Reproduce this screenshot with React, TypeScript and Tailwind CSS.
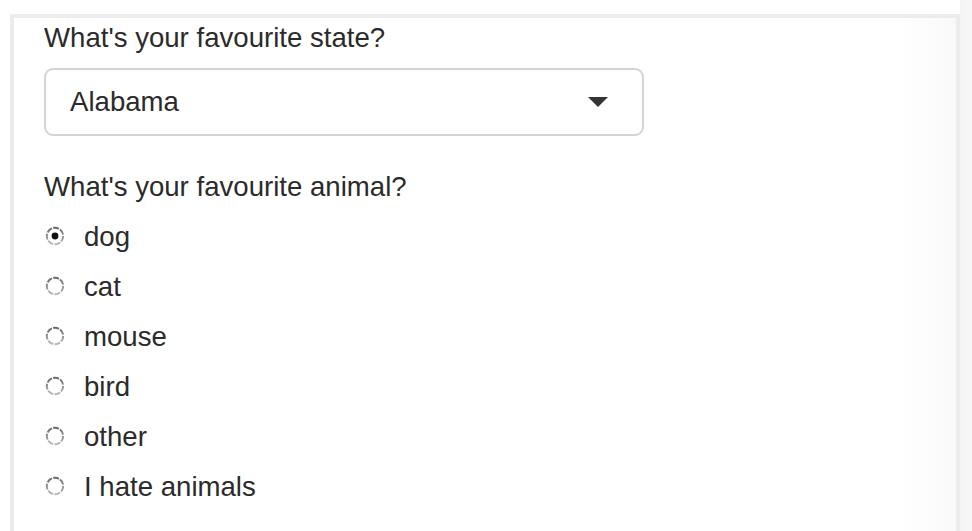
import React from "react";

const animals = ["dog", "cat", "mouse", "bird", "other", "I hate animals"];

function Radio({ checked }: { checked: boolean }) {
  return (
    <svg width="22" height="22" viewBox="0 0 22 22" className="shrink-0">
      <defs>
        <linearGradient id="rg" x1="0" y1="0" x2="0" y2="1">
          <stop offset="0" stopColor="#6a6a6a" />
          <stop offset="1" stopColor="#b8b8b8" />
        </linearGradient>
      </defs>
      <circle cx="11" cy="11" r="8.2" fill="#fff" stroke="url(#rg)" strokeWidth="2" strokeDasharray="6 1.3" />
      {checked && <circle cx="11" cy="11" r="3.4" fill="#111" />}
    </svg>
  );
}

export default function App() {
  return (
    <div
      className="w-[972px] h-[531px] bg-white overflow-hidden flex text-[#2b2b2b]"
      style={{ fontFamily: '"Liberation Sans", Arial, sans-serif' }}
    >
      <div className="ml-[10px] mt-[14px] w-[950px] h-[517px] shrink-0 border-[4px] border-b-0 border-[#ececec] bg-[linear-gradient(to_right,#ffffff_94%,#f9f9f9)] pl-[30px]">
        <div className="text-[27.6px] leading-[40px]">What's your favourite state?</div>
        <div className="mt-[10px] w-[600px] h-[68px] border-2 border-[#d4d4d4] rounded-[9px] bg-white flex items-center justify-between pl-[24px] pr-[34px]">
          <span className="text-[27.6px] leading-none">Alabama</span>
          <svg width="20" height="10" viewBox="0 0 20 10">
            <path d="M0 0 H20 L10 10 Z" fill="#333" />
          </svg>
        </div>
        <div className="mt-[31px] text-[27.6px] leading-[40px]">What's your favourite animal?</div>
        <div className="mt-[10px] flex flex-col gap-[10px]">
          {animals.map((a, i) => (
            <div key={a} className="flex items-center h-[40px]">
              <div className="-mt-[3px]">
                <Radio checked={i === 0} />
              </div>
              <span className="ml-[18px] text-[27.6px] leading-[40px]">{a}</span>
            </div>
          ))}
        </div>
      </div>
      <div className="flex-1 h-full bg-[linear-gradient(to_right,#f3f3f3,#f8f8f8)]" />
    </div>
  );
}
